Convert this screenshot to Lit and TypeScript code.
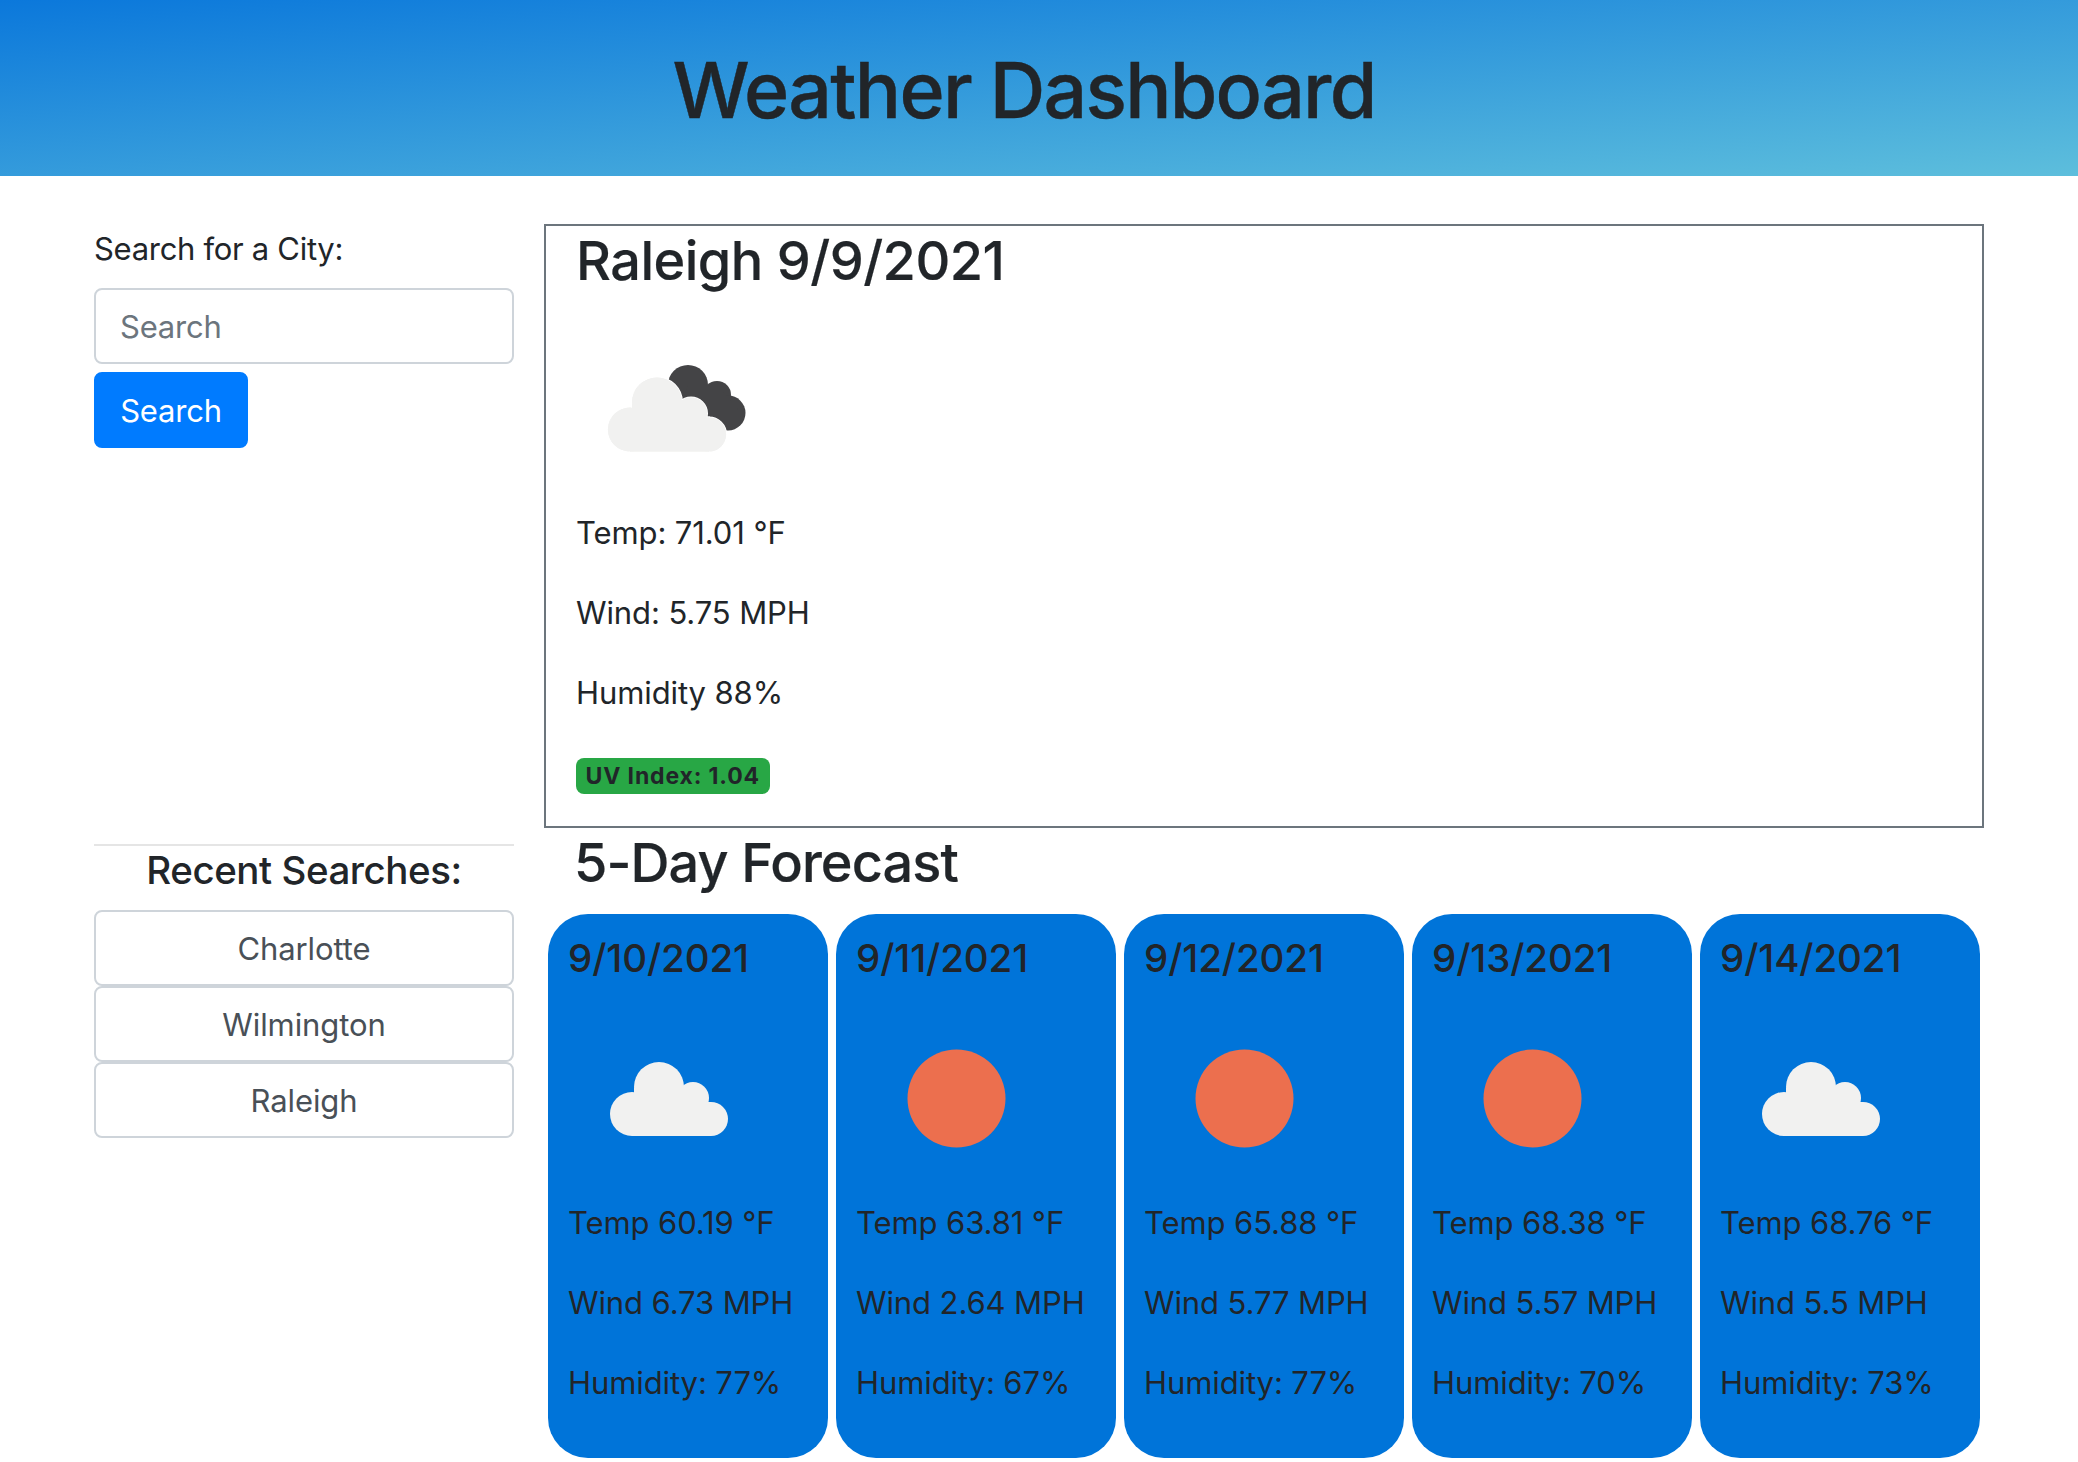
import { LitElement, html, css, svg } from "lit";
import { customElement } from "lit/decorators.js";

const cloudShape = svg`
  <circle cx="91" cy="89" r="25"></circle>
  <circle cx="125" cy="100" r="16"></circle>
  <circle cx="64" cy="116" r="22"></circle>
  <circle cx="143" cy="121" r="17"></circle>
  <rect x="64" y="104" width="79" height="34"></rect>
  <rect x="66" y="90" width="50" height="30"></rect>`;

const cloudIcon = html`<svg class="icon" viewBox="0 0 200 200" width="200" height="200">
  <g fill="#f1f1f0">${cloudShape}</g></svg>`;

const sunIcon = html`<svg class="icon" viewBox="0 0 200 200" width="200" height="200">
  <circle cx="100.5" cy="100.5" r="49" fill="#ec6f4e"></circle></svg>`;

const nightIcon = html`<svg class="icon" viewBox="0 0 200 200" width="200" height="200">
  <g fill="#444446">
    <circle cx="112" cy="76" r="20"></circle>
    <circle cx="141" cy="86" r="14"></circle>
    <circle cx="152" cy="104" r="17.5"></circle>
    <polygon points="112,76 141,76 162,100 145,120 100,110"></polygon>
  </g>
  <g transform="translate(-10 4.5)" fill="#f1f1f0" stroke="#fff" stroke-width="2" paint-order="stroke">${cloudShape}</g>
  <g transform="translate(-10 4.5)" fill="#f1f1f0">${cloudShape}</g>
</svg>`;

const forecast = [
  { date: "9/10/2021", icon: cloudIcon, temp: "60.19", wind: "6.73", hum: "77" },
  { date: "9/11/2021", icon: sunIcon, temp: "63.81", wind: "2.64", hum: "67" },
  { date: "9/12/2021", icon: sunIcon, temp: "65.88", wind: "5.77", hum: "77" },
  { date: "9/13/2021", icon: sunIcon, temp: "68.38", wind: "5.57", hum: "70" },
  { date: "9/14/2021", icon: cloudIcon, temp: "68.76", wind: "5.5", hum: "73" },
];

@customElement("app-root")
export class AppRoot extends LitElement {
  static styles = css`
    :host {
      display: block;
      font-family: Inter, "Liberation Sans", sans-serif;
      font-size: 31px;
      line-height: 48px;
      color: #212529;
      background: #fff;
      letter-spacing: -0.1px;
    }
    * { box-sizing: border-box; }
    header {
      height: 176px;
      padding: 42px 30px 38px 0;
      text-align: center;
      background: linear-gradient(to bottom right, #0b78db, #5dbedc);
    }
    h1 {
      margin: 0;
      font-size: 77px;
      line-height: 96px;
      font-weight: 500;
      letter-spacing: -1.75px;
      -webkit-text-stroke: 0.4px #212529;
    }
    .layout {
      display: grid;
      grid-template-columns: 420px 1440px;
      column-gap: 30px;
      padding: 48px 0 0 94px;
    }
    .label { padding-top: 1px; margin-bottom: 15px; letter-spacing: -0.3px; }
    input {
      display: block;
      width: 100%;
      height: 76px;
      padding: 0 24px;
      border: 2px solid #ced4da;
      border-radius: 8px;
      font: inherit;
      letter-spacing: -0.2px;
      color: #495057;
      outline: none;
    }
    input::placeholder { color: #6c757d; opacity: 1; }
    .go {
      display: block;
      width: 154px;
      height: 76px;
      margin-top: 8px;
      padding: 2px 0 0;
      border: 2px solid #007bff;
      border-radius: 8px;
      background: #007bff;
      color: #fff;
      font: inherit;
      letter-spacing: -0.2px;
    }
    .current {
      height: 604px;
      border: 2px solid #6c757d;
      padding: 0 30px;
    }
    h3 {
      margin: 0 0 16px;
      padding-top: 1px;
      height: 67.2px;
      font-size: 54px;
      line-height: 67.2px;
      font-weight: 500;
      letter-spacing: -0.5px;
      -webkit-text-stroke: 0.2px #212529;
    }
    .icon { display: block; }
    .filtered { filter: blur(0.5px); }
    p { margin: 0 0 32px; }
    .badge {
      display: inline-block;
      padding: 6px 9.6px;
      border-radius: 8px;
      background: #28a745;
      font-size: 23px;
      line-height: 24px;
      font-weight: 700;
      letter-spacing: 0.85px;
    }
    .recent hr {
      margin: 16px 0 0;
      border: 0;
      border-top: 2px solid rgba(0, 0, 0, 0.1);
    }
    h5 {
      margin: 0 0 16px;
      font-size: 38.5px;
      line-height: 48px;
      font-weight: 500;
    }
    .recent h5 { text-align: center; letter-spacing: -0.45px; }
    .city {
      display: block;
      width: 100%;
      height: 76px;
      padding: 2px 0 0;
      border: 2px solid #ced4da;
      border-radius: 8px;
      background: #fff;
      color: #495057;
      font: inherit;
      letter-spacing: inherit;
    }
    .forecast { padding-left: 30px; margin-bottom: 4px; }
    .forecast h3 { margin-bottom: 19px; padding-top: 1px; letter-spacing: -0.9px; }
    .cards {
      display: flex;
      gap: 8px;
      margin-left: -26px;
    }
    .card {
      width: 280px;
      height: 544px;
      flex: none;
      padding: 20px;
      border-radius: 40px;
      background: #0074d9;
    }
    .card .filtered { margin-bottom: 1px; }
    .date { letter-spacing: -0.1px; }
  `;

  render() {
    return html`
      <header><h1>Weather Dashboard</h1></header>
      <div class="layout">
        <div class="search">
          <div class="label">Search for a City:</div>
          <input type="text" placeholder="Search" />
          <button class="go">Search</button>
        </div>
        <section class="current">
          <h3>Raleigh 9/9/2021</h3>
          <div class="filtered">${nightIcon}</div>
          <p>Temp: 71.01 °F</p>
          <p>Wind: 5.75 MPH</p>
          <p>Humidity 88%</p>
          <span class="badge">UV Index: 1.04</span>
        </section>
        <div class="recent">
          <hr />
          <h5>Recent Searches:</h5>
          <button class="city">Charlotte</button>
          <button class="city">Wilmington</button>
          <button class="city">Raleigh</button>
        </div>
        <section class="forecast">
          <h3>5-Day Forecast</h3>
          <div class="cards">
            ${forecast.map(
              (d) => html`<div class="card">
                <h5 class="date">${d.date}</h5>
                <div class="filtered">${d.icon}</div>
                <p>Temp ${d.temp} °F</p>
                <p>Wind ${d.wind} MPH</p>
                <p>Humidity: ${d.hum}%</p>
              </div>`
            )}
          </div>
        </section>
      </div>
    `;
  }
}
